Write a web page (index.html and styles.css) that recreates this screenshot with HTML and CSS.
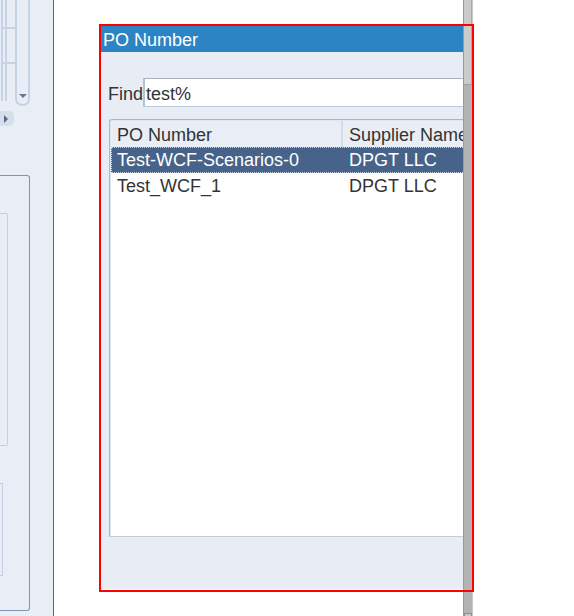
FILE: index.html
```html
<!DOCTYPE html>
<html>
<head>
<meta charset="utf-8">
<link rel="stylesheet" href="styles.css">
</head>
<body>
<div class="desk">
  <aside class="side">
    <div class="topgrid">
      <div class="cells">
        <div class="cell c1"></div>
        <div class="cell c2"></div>
        <div class="cell c3"></div>
      </div>
      <div class="vscroll"><span class="down"></span></div>
    </div>
    <div class="rbtn"><span class="right"></span></div>
    <div class="box">
      <div class="inner1"></div>
      <div class="inner2"></div>
    </div>
  </aside>
  <main class="canvas"></main>

  <section class="dialog">
    <header class="title">PO Number</header>
    <div class="dbody">
      <div class="find">
        <label class="find-label">Find</label>
        <div class="find-input">test%</div>
      </div>
      <div class="table">
        <div class="row head">
          <div class="col c-po">PO Number</div>
          <div class="col c-sup">Supplier Name</div>
        </div>
        <div class="row sel">
          <div class="col c-po">Test-WCF-Scenarios-0</div>
          <div class="col c-sup">DPGT LLC</div>
        </div>
        <div class="row">
          <div class="col c-po">Test_WCF_1</div>
          <div class="col c-sup">DPGT LLC</div>
        </div>
      </div>
    </div>
  </section>

  <div class="scrollbar"><div class="thumb"></div><div class="sb-end"></div></div>
  <div class="frame"></div>
</div>
</body>
</html>
```

FILE: styles.css
```css
* { box-sizing: border-box; }
html, body { margin: 0; padding: 0; background: #ffffff; }
body { font-family: "Liberation Sans", Arial, sans-serif; font-size: 18px; color: #333333; }

.desk { position: relative; width: 574px; height: 616px; overflow: hidden; display: flex; }

/* left panel */
.side { width: 54px; height: 616px; background: #e9eef6; border-right: 1px solid #4d6a93; flex: none; }
.topgrid { display: flex; height: 106px; width: 30px; }
.cells { width: 15px; display: flex; flex-direction: column; }
.cell { border-left: 2px solid #c6d3e5; margin-left: 1px; border-bottom: 2px solid #c6d3e5; position: relative; }
.cell::after { content: ""; position: absolute; left: 2px; top: 0; bottom: 0; border-left: 2px solid #c6d3e5; }
.c1 { height: 29px; }
.c2 { height: 35px; }
.c3 { height: 37px; border-bottom: none; }
.vscroll { width: 15px; height: 106px; border: 2px solid #c6d3e5; border-top: none; border-radius: 0 0 7px 7px; display: flex; justify-content: center; align-items: flex-end; padding-bottom: 6px; }
.down { width: 0; height: 0; border-left: 4px solid transparent; border-right: 4px solid transparent; border-top: 4px solid #6b7890; }
.rbtn { width: 14px; height: 15px; margin-top: 5px; background: #d5dfec; border-radius: 0 5px 5px 0; display: flex; align-items: center; padding-left: 4px; }
.right { width: 0; height: 0; border-top: 4px solid transparent; border-bottom: 4px solid transparent; border-left: 4px solid #5a6a82; }
.box { width: 30px; height: 436px; margin-top: 49px; border: 1px solid #7b93b4; border-left: none; border-radius: 0 3px 3px 0; padding-top: 37px; }
.inner1 { width: 8px; height: 233px; border: 1px solid #c2d0e2; border-left: none; border-radius: 0 2px 2px 0; }
.inner2 { width: 3px; height: 93px; margin-top: 37px; border: 1px solid #c2d0e2; border-left: none; }

.canvas { flex: 1; background: #ffffff; }

/* dialog window */
.dialog { position: absolute; left: 101px; top: 26px; width: 372px; height: 563px; background: #e8edf5; overflow: hidden; display: flex; flex-direction: column; }
.title { height: 26px; background: #2d84c5; color: #ffffff; padding: 3px 0 0 2px; line-height: 22px; white-space: nowrap; flex: none; }
.dbody { flex: 1; padding: 26px 0 52px 7px; display: flex; flex-direction: column; }
.find { display: flex; height: 29px; width: 420px; flex: none; }
.find-label { width: 35px; line-height: 20px; padding-top: 6px; }
.find-input { flex: 1; background: #ffffff; border-top: 1px solid #a6b0be; border-left: 2px solid #b4c2d6; border-bottom: 1px solid #bccbe0; padding: 5px 0 0 1px; line-height: 20px; }

.table { flex: 1; margin-top: 12px; margin-left: 1px; width: 420px; background: #ffffff; border-top: 1px solid #aab6c6; border-left: 1px solid #aab6c6; border-bottom: 1px solid #c2cddb; border-radius: 3px 0 0 0; box-shadow: inset 1px 1px 0 #dfe6ef; padding: 1px 0 0 1px; }
.row { display: flex; height: 26px; white-space: nowrap; }
.col { line-height: 24px; padding-top: 1px; }
.c-po { width: 232px; padding-left: 6px; }
.c-sup { padding-left: 6px; }
.head { background: #e9eef6; height: 26px; }
.head .col { padding-top: 2px; }
.head .c-po { border-right: 2px solid #d3dce8; }
.sel { background: #476389; color: #ffffff; outline: 1px dotted #c9d3e0; outline-offset: -1px; }

/* scrollbar on top */
.scrollbar { position: absolute; left: 463px; top: 0; width: 10px; height: 616px; background: #b3b3b3; border-left: 1px solid #9a9a9a; border-right: 1px solid #c8c8c8; z-index: 2; }
.thumb { height: 85px; background: #cbcbcb; border-bottom: 1px solid #9f9f9f; border-right: 1px solid #a9a9a9; }
.sb-end { position: absolute; left: 0; bottom: 0; width: 8px; height: 3px; border: 1px solid #8f8f8f; border-bottom: none; background: #c8c8c8; }

.frame { position: absolute; left: 99px; top: 24px; width: 375px; height: 568px; border: 2px solid #ff0000; z-index: 3; pointer-events: none; }
```
